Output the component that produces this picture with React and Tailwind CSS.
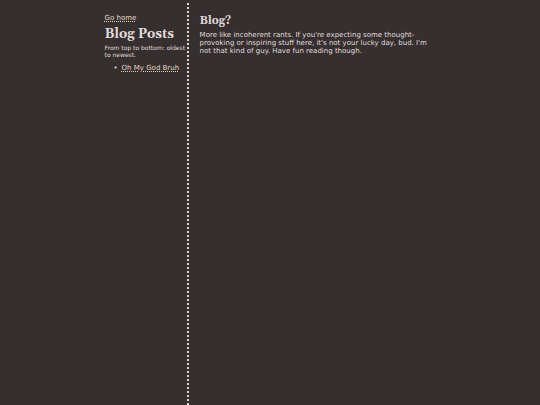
const posts = [{ title: "Oh My God Bruh", href: "#oh-my-god-bruh" }];

const linkClass =
  "text-[#e3d5c3] underline decoration-dotted decoration-1 underline-offset-1";

const Sidebar = () => {
  return (
    <nav className="w-[84px] shrink-0 border-r-2 border-dotted border-[#dcd8d8] pt-[11px]">
      <a href="#home" className={linkClass}>Go home</a>
      <h1 className="mt-1 font-['Georgia','Gelasio','DejaVu_Serif',serif] text-[13px] leading-4 font-bold whitespace-nowrap">
        Blog Posts
      </h1>
      <p className="mt-[2px] text-[6px] leading-[7px]">From top to bottom: oldest to newest.</p>
      <ul className="mt-[6px] pl-[9px]">
        {posts.map((post) => (
          <li key={post.href} className="flex whitespace-nowrap before:w-2 before:shrink-0 before:content-['•']">
            <a href={post.href} className={linkClass}>{post.title}</a>
          </li>
        ))}
      </ul>
    </nav>
  );
};

const App = () => {
  return (
    <div className="min-h-screen bg-[#362f2f] font-['DejaVu_Sans',sans-serif] text-[7px] leading-2 text-[#e0dcdc]">
      <div className="mx-auto flex min-h-screen w-[62%] pt-[3px] pl-[2px]">
        <Sidebar />
        <main className="min-w-0 flex-1 pt-[10px] pl-[11px]">
          <h2 className="font-['Georgia','Gelasio','DejaVu_Serif',serif] text-[11px] leading-4 font-bold">
            Blog?
          </h2>
          <p className="mt-[2px]">
            More like incoherent rants. If you're expecting some thought-provoking or inspiring
            stuff here, it's not your lucky day, bud. I'm not that kind of guy. Have fun reading
            though.
          </p>
        </main>
      </div>
    </div>
  );
};

export default App;
